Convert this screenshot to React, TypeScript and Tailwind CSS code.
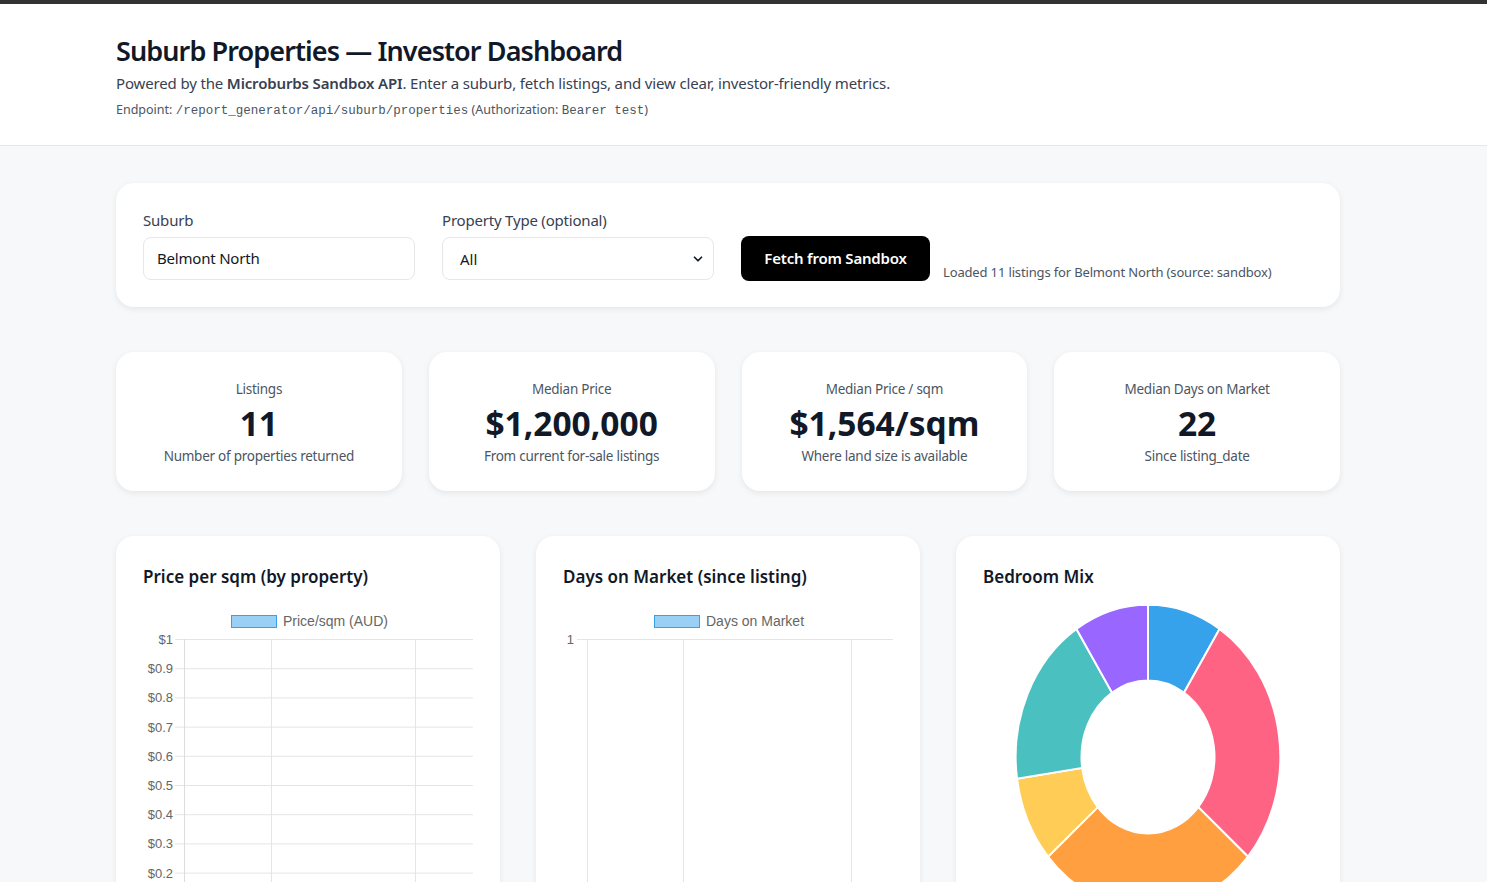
import { ChevronDown } from 'lucide-react';

const stats = [
  { label: "Listings", value: "11", sub: "Number of properties returned" },
  { label: "Median Price", value: "$1,200,000", sub: "From current for-sale listings" },
  { label: "Median Price / sqm", value: "$1,564/sqm", sub: "Where land size is available" },
  { label: "Median Days on Market", value: "22", sub: "Since listing_date" },
];

const bedrooms = [
  { n: 1, color: "#36A2EB" },
  { n: 3, color: "#FF6384" },
  { n: 3, color: "#FF9F40" },
  { n: 1, color: "#FFCD56" },
  { n: 2, color: "#4BC0C0" },
  { n: 1, color: "#9966FF" },
];

const font = "font-['Noto_Sans',sans-serif]";
const chartFont = "Liberation Sans, Arial, sans-serif";

// ring segment, angles clockwise from 12 o'clock
const arc = (a0: number, a1: number, R: number, r: number) => {
  const p = (a: number, rad: number) => `${100 + rad * Math.sin(a)} ${100 - rad * Math.cos(a)}`;
  const large = a1 - a0 > Math.PI ? 1 : 0;
  return `M ${p(a0, R)} A ${R} ${R} 0 ${large} 1 ${p(a1, R)} L ${p(a1, r)} A ${r} ${r} 0 ${large} 0 ${p(a0, r)} Z`;
};

const Legend = ({ x, label }: { x: number; label: string }) => (
  <g>
    <rect x={x + 0.5} y={15.5} width={45} height={12} fill="rgba(54,162,235,0.5)" stroke="#36A2EB" strokeWidth={1} />
    <text x={x + 52} y={26} fontSize={14} fill="#666" fontFamily={chartFont}>{label}</text>
  </g>
);

const PriceChart = () => {
  const ticks = ["$1", "$0.9", "$0.8", "$0.7", "$0.6", "$0.5", "$0.4", "$0.3", "$0.2", "$0.1", "$0"];
  return (
    <svg width={330} height={300} className="block">
      <Legend x={88} label="Price/sqm (AUD)" />
      {ticks.map((t, i) => {
        const y = 39.5 + i * 29.2;
        return (
          <g key={t}>
            <line x1={32} x2={330} y1={y} y2={y} stroke="#e5e5e5" />
            <text x={30} y={y + 4.5} fontSize={13} fill="#666" textAnchor="end" fontFamily={chartFont}>{t}</text>
          </g>
        );
      })}
      {[41.5, 128.5, 272.5].map(x => (
        <line key={x} x1={x} x2={x} y1={39} y2={300} stroke={x === 41.5 ? "#dcdcdc" : "#e5e5e5"} />
      ))}
    </svg>
  );
};

const DaysChart = () => (
  <svg width={330} height={300} className="block">
    <Legend x={91} label="Days on Market" />
    <line x1={14} x2={330} y1={39.5} y2={39.5} stroke="#e5e5e5" />
    <text x={11} y={44} fontSize={13} fill="#666" textAnchor="end" fontFamily={chartFont}>1</text>
    {[24.5, 120.5, 288.5].map(x => (
      <line key={x} x1={x} x2={x} y1={39} y2={300} stroke="#e5e5e5" />
    ))}
  </svg>
);

const Donut = () => {
  const total = bedrooms.reduce((s, b) => s + b.n, 0);
  let acc = 0;
  return (
    <div className="flex justify-center pt-[14px]">
      <svg width={266} height={306} viewBox="0 0 200 200" preserveAspectRatio="none" className="block">
        {bedrooms.map((b, i) => {
          const a0 = (acc / total) * Math.PI * 2;
          acc += b.n;
          const a1 = (acc / total) * Math.PI * 2;
          return (
            <path key={i} d={arc(a0, a1, 99.5, 50)} fill={b.color} stroke="#fff" strokeWidth={2} vectorEffect="non-scaling-stroke" />
          );
        })}
      </svg>
    </div>
  );
};

const Card = ({ children, className = "" }: { children: React.ReactNode; className?: string }) => (
  <div className={`bg-white rounded-[18px] shadow-[0_2px_6px_rgba(0,0,0,0.08)] ${className}`}>{children}</div>
);

export default function App() {
  return (
    <div className={`min-h-screen bg-[#f7f8fa] ${font} text-[#111827]`}>
      <div className="h-[4px] bg-[#333333]" />

      {/* Header */}
      <header className="bg-white border-b border-[#e5e7eb] pt-[30px] pb-[24px]">
        <div className="ml-[116px] w-[1224px]">
          <h1 className="text-[27px] leading-[34px] font-semibold tracking-[-0.9px]">Suburb Properties — Investor Dashboard</h1>
          <p className="mt-[4px] text-[15px] leading-[22px] text-[#374151] tracking-[-0.15px]">
            Powered by the <span className="font-semibold">Microburbs Sandbox API</span>. Enter a suburb, fetch listings, and view clear, investor-friendly metrics.
          </p>
          <p className="mt-[6px] text-[12.5px] leading-[20px] text-[#4b5563]">
            Endpoint: <code className="font-['Liberation_Mono',monospace] text-[12.5px]">/report_generator/api/suburb/properties</code> (Authorization: <code className="font-['Liberation_Mono',monospace] text-[12.5px]">Bearer test</code>)
          </p>
        </div>
      </header>

      <main className="ml-[116px] w-[1224px] pt-[37px] flex flex-col gap-[45px]">
        {/* Filters */}
        <Card className="p-[27px] rounded-[16px]">
          <div className="flex items-end">
            <div className="w-[272px]">
              <label className="block text-[15px] leading-[21px] text-[#374151] mb-[6px] tracking-[-0.2px]">Suburb</label>
              <div className="h-[43px] rounded-[8px] border border-[#e5e7eb] px-[13px] flex items-center text-[15px] text-[#111827] tracking-[-0.2px]">Belmont North</div>
            </div>
            <div className="w-[272px] ml-[27px]">
              <label className="block text-[15px] leading-[21px] text-[#374151] mb-[6px] tracking-[-0.2px]">Property Type (optional)</label>
              <div className="h-[43px] rounded-[8px] border border-[#e5e7eb] pl-[17px] pr-[8px] flex items-center justify-between text-[15px] text-[#111827]">
                <span className="pt-[2px]">All</span>
                <ChevronDown size={14} strokeWidth={3} />
              </div>
            </div>
            <button className="ml-[27px] w-[189px] h-[45px] rounded-[8px] bg-black text-white text-[15px] font-semibold tracking-[-0.2px] mb-[-1px]">Fetch from Sandbox</button>
            <span className="ml-[13px] text-[13px] leading-[18px] text-[#4b5563] tracking-[-0.15px] mb-[-1px]">Loaded 11 listings for Belmont North (source: sandbox)</span>
          </div>
        </Card>

        {/* Stats */}
        <div className="grid grid-cols-4 gap-[27px]">
          {stats.map(s => (
            <Card key={s.label} className="pt-[27px] pb-[25px] text-center">
              <div className="text-[13.5px] leading-[20px] text-[#4b5563] tracking-[-0.25px]">{s.label}</div>
              <div className="mt-[4px] text-[33.5px] leading-[40px] font-bold text-[#111827]">{s.value}</div>
              <div className="mt-[3px] text-[13.5px] leading-[20px] text-[#4b5563] tracking-[-0.25px]">{s.sub}</div>
            </Card>
          ))}
        </div>

        {/* Charts */}
        <div className="grid grid-cols-3 gap-[36px]">
          <Card className="px-[27px] pt-[28px] pb-[20px]">
            <h2 className="text-[17px] leading-[26px] font-semibold">Price per sqm (by property)</h2>
            <div className="mt-[10px]"><PriceChart /></div>
          </Card>
          <Card className="px-[27px] pt-[28px] pb-[20px]">
            <h2 className="text-[17px] leading-[26px] font-semibold">Days on Market (since listing)</h2>
            <div className="mt-[10px]"><DaysChart /></div>
          </Card>
          <Card className="px-[27px] pt-[28px] pb-[20px]">
            <h2 className="text-[17px] leading-[26px] font-semibold">Bedroom Mix</h2>
            <Donut />
          </Card>
        </div>
      </main>
    </div>
  );
}
